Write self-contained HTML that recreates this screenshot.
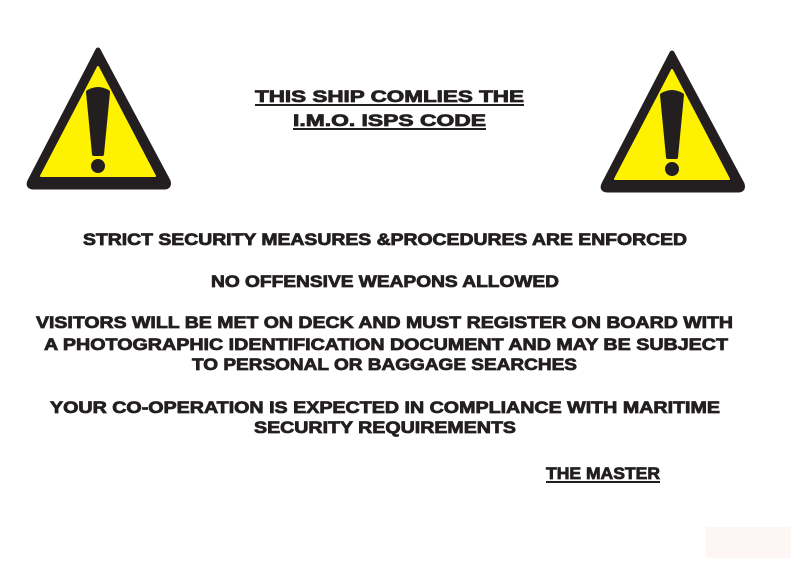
<!DOCTYPE html>
<html><head><meta charset="utf-8"><style>
html,body{margin:0;padding:0;background:#fff;width:800px;height:566px;overflow:hidden}
svg{display:block}
text{font-family:"Liberation Sans",Arial,sans-serif;font-weight:bold;font-size:17px;fill:#231f20;stroke:#231f20;stroke-width:0.8px}
</style></head><body>
<svg width="800" height="566" viewBox="0 0 800 566">
<rect x="706" y="527" width="85" height="31" fill="#fdf6f4"/>
<g id="w1">
<path d="M98,50 L168,181 Q170,187 164,187 L34,187 Q27,187 30,181 Z" fill="#231f20" stroke="#231f20" stroke-width="5" stroke-linejoin="round"/>
<path d="M98,67 L155,176 L41,176 Z" fill="#fff200" stroke="#fff200" stroke-width="2" stroke-linejoin="round"/>
<path d="M88,92 Q98,86 108,92 L102,154 L94,154 Z" fill="#231f20" stroke="#231f20" stroke-width="4" stroke-linejoin="round"/>
<circle cx="98" cy="166" r="7" fill="#231f20"/>
</g>
<use href="#w1" transform="translate(574,3)"/>
<text x="255" y="102" textLength="269" lengthAdjust="spacingAndGlyphs">THIS SHIP COMLIES THE</text>
<rect x="255" y="104" width="269" height="2" fill="#231f20"/>
<text x="293" y="126" textLength="193" lengthAdjust="spacingAndGlyphs">I.M.O. ISPS CODE</text>
<rect x="293" y="128" width="193" height="2" fill="#231f20"/>
<text x="83" y="245" textLength="604" lengthAdjust="spacingAndGlyphs">STRICT SECURITY MEASURES &amp;PROCEDURES ARE ENFORCED</text>
<text x="211" y="287" textLength="348" lengthAdjust="spacingAndGlyphs">NO OFFENSIVE WEAPONS ALLOWED</text>
<text x="36" y="328" textLength="697" lengthAdjust="spacingAndGlyphs">VISITORS WILL BE MET ON DECK AND MUST REGISTER ON BOARD WITH</text>
<text x="44" y="350" textLength="684" lengthAdjust="spacingAndGlyphs">A PHOTOGRAPHIC IDENTIFICATION DOCUMENT AND MAY BE SUBJECT</text>
<text x="192" y="370" textLength="385" lengthAdjust="spacingAndGlyphs">TO PERSONAL OR BAGGAGE SEARCHES</text>
<text x="50" y="413" textLength="670" lengthAdjust="spacingAndGlyphs">YOUR CO-OPERATION IS EXPECTED IN COMPLIANCE WITH MARITIME</text>
<text x="254" y="433" textLength="262" lengthAdjust="spacingAndGlyphs">SECURITY REQUIREMENTS</text>
<text x="546" y="479" textLength="114" lengthAdjust="spacingAndGlyphs">THE MASTER</text>
<rect x="546" y="481" width="114" height="2" fill="#231f20"/>
</svg>
</body></html>
